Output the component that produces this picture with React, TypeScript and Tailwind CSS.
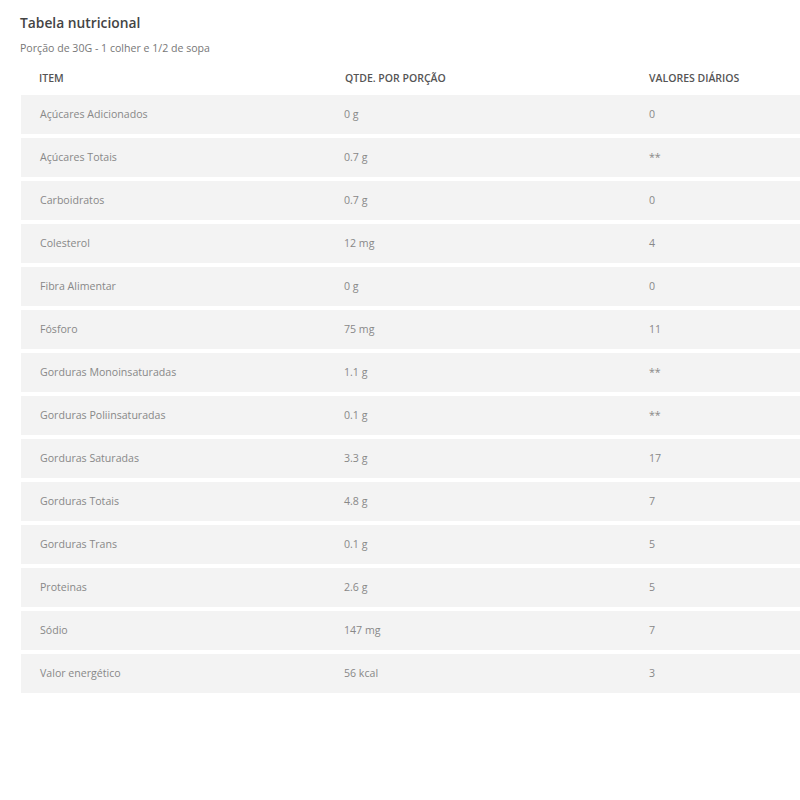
const rows: [string, string, string][] = [
  ["Açúcares Adicionados", "0 g", "0"],
  ["Açúcares Totais", "0.7 g", "**"],
  ["Carboidratos", "0.7 g", "0"],
  ["Colesterol", "12 mg", "4"],
  ["Fibra Alimentar", "0 g", "0"],
  ["Fósforo", "75 mg", "11"],
  ["Gorduras Monoinsaturadas", "1.1 g", "**"],
  ["Gorduras Poliinsaturadas", "0.1 g", "**"],
  ["Gorduras Saturadas", "3.3 g", "17"],
  ["Gorduras Totais", "4.8 g", "7"],
  ["Gorduras Trans", "0.1 g", "5"],
  ["Proteinas", "2.6 g", "5"],
  ["Sódio", "147 mg", "7"],
  ["Valor energético", "56 kcal", "3"],
]

export default function App() {
  return (
    <div
      className="w-[800px] h-[800px] overflow-hidden bg-white pl-[20px] pt-[14px]"
      style={{ fontFamily: '"Open Sans", "Liberation Sans", sans-serif' }}
    >
      <h1 className="text-[13.8px] leading-[18px] font-semibold text-[#444]">Tabela nutricional</h1>
      <p className="mt-[9px] text-[10.6px] leading-[14px] text-[#777]">Porção de 30G - 1 colher e 1/2 de sopa</p>

      <div className="ml-px w-[915px]">
        <div className="mt-[16px] grid grid-cols-3 text-[10.5px] leading-[14px] font-semibold uppercase text-[#555]">
          <span className="pl-[18px]">Item</span>
          <span className="pl-[19px]">Qtde. por porção</span>
          <span className="pl-[18px]">Valores diários</span>
        </div>

        <ul className="mt-[10px] flex flex-col gap-[4px]">
          {rows.map(([item, qty, dv]) => (
            <li
              key={item}
              className="grid h-[39px] grid-cols-3 items-center bg-[#f3f3f3] text-[10.6px] text-[#888]"
            >
              <span className="pl-[19px]">{item}</span>
              <span className="pl-[18px]">{qty}</span>
              <span className="pl-[18px]">{dv}</span>
            </li>
          ))}
        </ul>
      </div>
    </div>
  )
}
